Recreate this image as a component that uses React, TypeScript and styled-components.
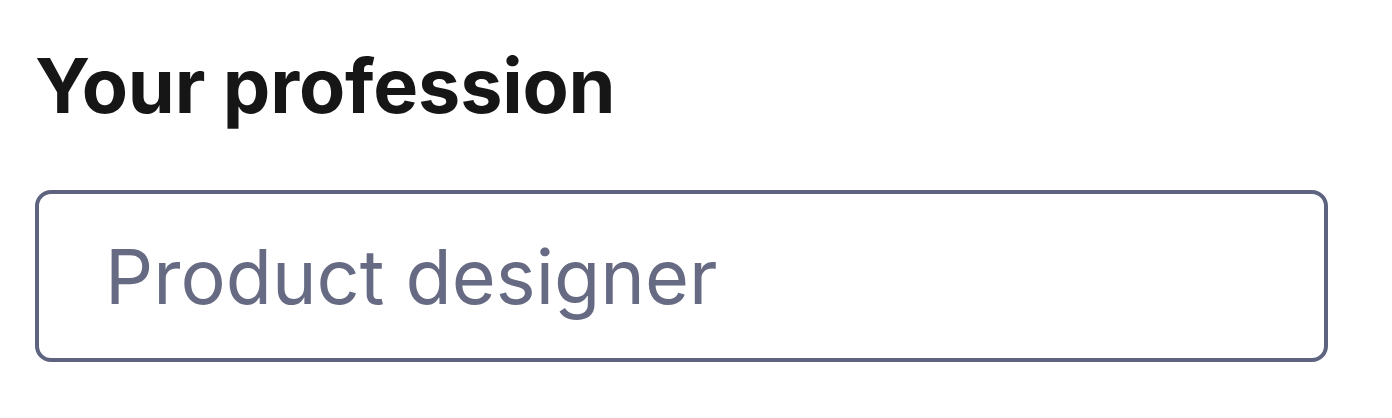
import styled, { createGlobalStyle } from "styled-components";

const GlobalStyle = createGlobalStyle`
  html, body {
    margin: 0;
    padding: 0;
    background: #ffffff;
    font-family: Inter, "Liberation Sans", sans-serif;
  }
`;

const Field = styled.div`
  display: flex;
  flex-direction: column;
  row-gap: 58px;
  padding: 40px 0 0 35px;
  width: 1293px;
`;

const Label = styled.label`
  font-size: 75.5px;
  font-weight: 700;
  line-height: 92px;
  color: #161616;
  letter-spacing: -0.2px;
`;

const Input = styled.input`
  box-sizing: border-box;
  width: 100%;
  height: 172px;
  padding: 0 0 0 66px;
  border: 4px solid #5e6480;
  border-radius: 16px;
  background: #ffffff;
  font-family: Inter, "Liberation Sans", sans-serif;
  font-size: 75.5px;
  color: #1f2333;
  outline: none;

  &::placeholder {
    color: #666b83;
    opacity: 1;
  }
`;

const App = () => {
  return (
    <>
      <GlobalStyle />
      <Field>
        <Label htmlFor="profession">Your profession</Label>
        <Input id="profession" type="text" placeholder="Product designer" />
      </Field>
    </>
  );
};

export default App;
